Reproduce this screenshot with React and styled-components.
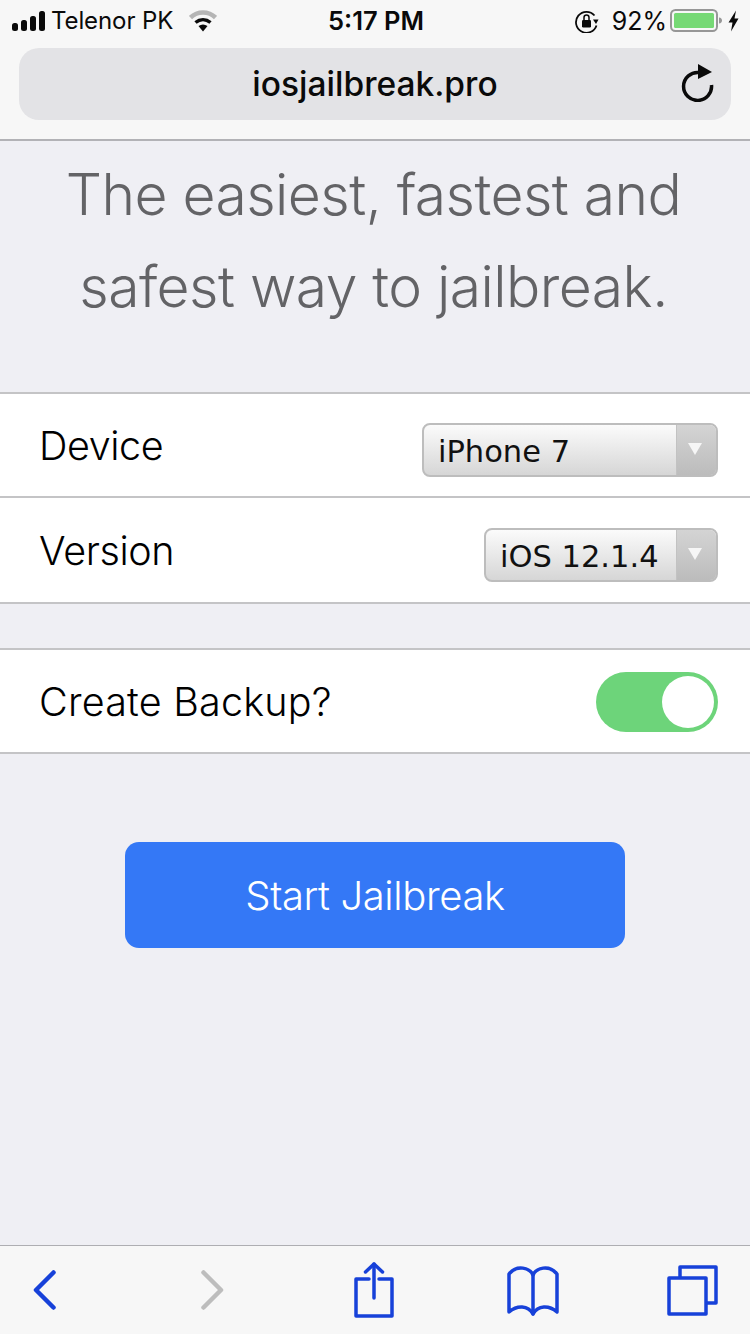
import React from 'react';
import styled, { createGlobalStyle } from 'styled-components';

const GlobalStyle = createGlobalStyle`
  html, body {
    margin: 0;
    padding: 0;
    background: #efeff4;
  }
  * {
    box-sizing: border-box;
  }
`;

const Page = styled.div`
  width: 750px;
  height: 1334px;
  display: flex;
  flex-direction: column;
  background: #efeff4;
  font-family: Inter, "Liberation Sans", sans-serif;
  overflow: hidden;
`;

const Header = styled.header`
  height: 141px;
  background: #f7f7f7;
  border-bottom: 2px solid #b2b2b6;
  display: flex;
  flex-direction: column;
`;

const StatusBar = styled.div`
  height: 48px;
  padding: 0 10px 7px 12px;
  display: grid;
  grid-template-columns: 1fr auto 1fr;
  align-items: center;
  color: #0a0a0a;
  font-size: 25px;
`;

const StatusLeft = styled.div`
  display: flex;
  align-items: center;
`;

const StatusRight = styled.div`
  display: flex;
  align-items: center;
  justify-content: flex-end;
`;

const Carrier = styled.span`
  margin: 0 16px 0 6px;
  font-weight: 400;
  font-size: 24px;
  letter-spacing: -0.1px;
`;

const Clock = styled.span`
  font-weight: 600;
  font-size: 25.5px;
`;

const Percent = styled.span`
  margin: 0 3px 0 13px;
  font-size: 25px;
`;

const UrlBar = styled.div`
  position: relative;
  height: 72px;
  margin: 0 19px;
  border-radius: 20px;
  background: #e3e3e6;
  display: flex;
  align-items: center;
  justify-content: center;
  font-size: 33.5px;
  font-weight: 500;
  color: #0a0a0a;
`;

const Reload = styled.svg`
  position: absolute;
  right: 17px;
  top: 16px;
`;

const Headline = styled.h1`
  margin: 0;
  height: 251px;
  padding: 8px 3px 0 0;
  text-align: center;
  font-family: Inter, sans-serif;
  font-size: 57px;
  font-weight: 300;
  letter-spacing: -0.55px;
  line-height: 92px;
  color: #636366;
`;

const Group = styled.section`
  background: #fff;
  border-top: 2px solid #c4c4c6;
  margin-bottom: ${(p) => p.$gap}px;
`;

const Row = styled.div`
  height: ${(p) => p.$h}px;
  padding: 1px 32px 0 39px;
  display: flex;
  align-items: center;
  justify-content: space-between;
  border-bottom: 2px solid #c4c4c6;
`;

const Label = styled.span`
  font-family: Inter, sans-serif;
  font-weight: 300;
  font-size: 39.5px;
  letter-spacing: ${(p) => p.$spacing}px;
  color: #000;
`;

const Select = styled.div`
  width: ${(p) => p.$w}px;
  height: 54px;
  margin-top: 8px;
  display: flex;
  border: 2px solid #bdbdbd;
  border-radius: 8px;
  overflow: hidden;
  background: linear-gradient(#fbfbfb, #d6d6d6);
`;

const SelectValue = styled.div`
  flex: 1;
  padding-left: 14px;
  font-family: "DejaVu Sans", Verdana, sans-serif;
  font-weight: 400;
  font-size: 30.5px;
  line-height: 53px;
  color: #111;
  white-space: nowrap;
`;

const SelectArrow = styled.div`
  width: 40px;
  display: flex;
  align-items: center;
  justify-content: center;
  padding: 0 3px 2px 0;
  background: linear-gradient(#d4d4d4, #bcbcbc);
  border-left: 1px solid #c2c2c2;
`;

const Toggle = styled.div`
  width: 122px;
  height: 60px;
  margin-top: 1px;
  padding: 4px;
  border-radius: 30px;
  background: #6dd47a;
  display: flex;
  justify-content: flex-end;
`;

const Knob = styled.div`
  width: 52px;
  height: 52px;
  border-radius: 50%;
  background: #fff;
`;

const Main = styled.main`
  flex: 1;
  display: flex;
  justify-content: center;
  padding-top: 88px;
`;

const StartButton = styled.button`
  width: 500px;
  height: 106px;
  border: 0;
  border-radius: 14px;
  background: #3478f6;
  color: #fff;
  font-family: Inter, sans-serif;
  font-size: 40px;
  font-weight: 300;
  letter-spacing: -0.4px;
`;

const Toolbar = styled.footer`
  height: 89px;
  background: #f7f7f7;
  border-top: 1px solid #aeaeb2;
  display: grid;
  grid-template-columns: 90px 244px 80px 238px 80px;
  align-items: center;
`;

const ToolSlot = styled.div`
  display: flex;
  justify-content: center;
`;

const Signal = () => (
  <svg width="33" height="20" viewBox="0 0 33 20">
    <rect x="0" y="12" width="6" height="8" rx="2.5" fill="#0a0a0a" />
    <rect x="9" y="9" width="6" height="11" rx="2.5" fill="#0a0a0a" />
    <rect x="18" y="5" width="6" height="15" rx="2.5" fill="#0a0a0a" />
    <rect x="27" y="0" width="6" height="20" rx="2.5" fill="#0a0a0a" />
  </svg>
);

const Wifi = () => (
  <svg width="28" height="22" viewBox="0 0 28 22" fill="none">
    <path d="M1.500 7.500C8.500 .8 19.500 .8 26.500 7.500" stroke="#b5b5b5" strokeWidth="4.500" />
    <path d="M6.500 12.500C11 8.800 17 8.800 21.500 12.500" stroke="#0a0a0a" strokeWidth="3.500" />
    <path d="M9.500 16L14 21.500L18.500 16C15.500 14 12.500 14 9.500 16Z" fill="#0a0a0a" />
  </svg>
);

const RotationLock = () => (
  <svg width="24" height="24" viewBox="0 0 24 24" fill="none">
    <path d="M19.500 6.500A10.500 10.500 0 1 0 21.500 16.500" stroke="#0a0a0a" strokeWidth="1.800" />
    <path d="M18 10.500L23.500 10.500L21 15Z" fill="#0a0a0a" />
    <rect x="7" y="11" width="9" height="7.500" rx="1.200" fill="#0a0a0a" />
    <path d="M9 11V8.500a2.500 2.500 0 0 1 5 0V11" stroke="#0a0a0a" strokeWidth="1.500" />
  </svg>
);

const Battery = () => (
  <svg width="70" height="24" viewBox="0 0 70 24" fill="none">
    <rect x="1" y="1" width="46" height="21" rx="4.500" stroke="#979797" strokeWidth="2" />
    <rect x="4" y="4" width="40" height="15" rx="1.500" fill="#76d975" />
    <path d="M49 8.500c2 0 3 1.500 3 3s-1 3-3 3z" fill="#979797" />
    <path d="M66 1.500L58.500 13.500H62.500L61 22.500L68.500 9.500H64.500Z" fill="#0a0a0a" />
  </svg>
);

const BackIcon = () => (
  <svg width="24" height="40" viewBox="0 0 24 40" fill="none">
    <path d="M20.500 2.500L3 20L20.500 37.500" stroke="#1741d9" strokeWidth="4.500" strokeLinecap="round" strokeLinejoin="round" />
  </svg>
);

const ForwardIcon = () => (
  <svg width="24" height="40" viewBox="0 0 24 40" fill="none">
    <path d="M3.500 2.500L21 20L3.500 37.500" stroke="#bdbdbd" strokeWidth="4.500" strokeLinecap="round" strokeLinejoin="round" />
  </svg>
);

const ShareIcon = () => (
  <svg width="40" height="56" viewBox="0 0 40 56" fill="none" stroke="#1741d9" strokeWidth="3.500" strokeLinecap="round" strokeLinejoin="round">
    <path d="M15 17H2V54H38V17H25" />
    <path d="M20 36V2" />
    <path d="M11.500 10L20 2L28.500 10" />
  </svg>
);

const BookIcon = () => (
  <svg width="52" height="51" viewBox="0 0 52 51" fill="none" stroke="#1741d9" strokeWidth="3.500" strokeLinejoin="round" strokeLinecap="round">
    <path d="M26 10C23 3 10 -1 2 9V47C10 40 21 40 26 49C31 40 42 40 50 47V9C42 -1 29 3 26 10Z" />
    <path d="M26 10V49" />
  </svg>
);

const TabsIcon = () => (
  <svg width="51" height="51" viewBox="0 0 51 51" fill="none" stroke="#1741d9" strokeWidth="3.500" strokeLinejoin="round">
    <path d="M13 12V2H49V38H39" />
    <rect x="2" y="13" width="37" height="36" />
  </svg>
);

const Caret = () => (
  <svg width="14" height="12" viewBox="0 0 14 12">
    <path d="M0 0H14L7 12Z" fill="#f6f6f6" />
  </svg>
);

const Dropdown = ({ width, value }) => (
  <Select $w={width}>
    <SelectValue>{value}</SelectValue>
    <SelectArrow>
      <Caret />
    </SelectArrow>
  </Select>
);

export default function App() {
  return (
    <Page>
      <GlobalStyle />
      <Header>
        <StatusBar>
          <StatusLeft>
            <Signal />
            <Carrier>Telenor PK</Carrier>
            <Wifi />
          </StatusLeft>
          <Clock>5:17 PM</Clock>
          <StatusRight>
            <RotationLock />
            <Percent>92%</Percent>
            <Battery />
          </StatusRight>
        </StatusBar>
        <UrlBar>
          iosjailbreak.pro
          <Reload width="34" height="38" viewBox="0 0 34 38" fill="none">
            <path d="M19 8.500A14 14 0 1 0 31.500 21" stroke="#0a0a0a" strokeWidth="3.500" />
            <path d="M18 0L32 8L18 15Z" fill="#0a0a0a" />
          </Reload>
        </UrlBar>
      </Header>
      <Headline>
        The easiest, fastest and
        <br />
        safest way to jailbreak.
      </Headline>
      <Group $gap={44}>
        <Row $h={104}>
          <Label $spacing={-0.4}>Device</Label>
          <Dropdown width={296} value="iPhone 7" />
        </Row>
        <Row $h={106}>
          <Label $spacing={-0.4}>Version</Label>
          <Dropdown width={234} value="iOS 12.1.4" />
        </Row>
      </Group>
      <Group $gap={0}>
        <Row $h={104}>
          <Label $spacing={0.2}>Create Backup?</Label>
          <Toggle>
            <Knob />
          </Toggle>
        </Row>
      </Group>
      <Main>
        <StartButton>Start Jailbreak</StartButton>
      </Main>
      <Toolbar>
        <ToolSlot><BackIcon /></ToolSlot>
        <ToolSlot><ForwardIcon /></ToolSlot>
        <ToolSlot><ShareIcon /></ToolSlot>
        <ToolSlot><BookIcon /></ToolSlot>
        <ToolSlot><TabsIcon /></ToolSlot>
      </Toolbar>
    </Page>
  );
}
